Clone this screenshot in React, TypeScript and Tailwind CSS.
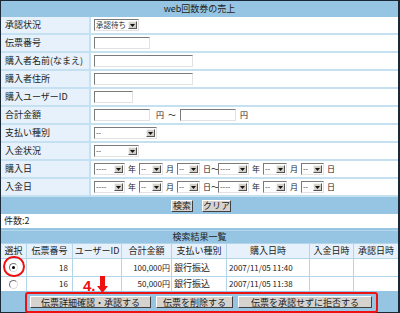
const font = "font-['Noto_Sans_CJK_JP','Noto_Sans',sans-serif]";

const Triangle = () => (
  <svg width="5" height="3" viewBox="0 0 5 3">
    <path d="M0 0 L5 0 L2.5 3 Z" fill="#111" />
  </svg>
);

const Sel = ({ text, w }: { text: string; w: string }) => (
  <div
    className={`flex h-[12px] items-stretch border border-t-[#7a7a7a] border-l-[#7a7a7a] border-b-[#e2e2e2] border-r-[#e2e2e2] bg-white ${w}`}
  >
    <span className="flex-1 overflow-hidden whitespace-nowrap pl-px text-[7.5px] leading-[10px] text-[#333]">{text}</span>
    <span className="m-px flex w-[9px] items-center justify-center border border-t-[#f4f4f4] border-l-[#f4f4f4] border-b-[#555] border-r-[#555] bg-[#d4d0c8]">
      <Triangle />
    </span>
  </div>
);

const Input = ({ w }: { w: string }) => (
  <div
    className={`h-[12px] border border-t-[#7a7a7a] border-l-[#7a7a7a] border-b-[#e2e2e2] border-r-[#e2e2e2] bg-white ${w}`}
  />
);

const Btn = ({ label, w }: { label: string; w: string }) => (
  <div
    className={`flex h-[12px] items-center justify-center border border-t-white border-l-white border-b-[#404040] border-r-[#404040] bg-[#d6d3ce] text-[9px] leading-none text-[#222] ${w}`}
  >
    {label}
  </div>
);

const Row = ({ label, gap = "gap-[4px]", children }: { label: string; gap?: string; children?: React.ReactNode }) => (
  <div className="flex h-[18px] border-b-2 border-[#c4e0f1]">
    <div className="flex w-[88px] items-center bg-[#e6f1fb] pl-[4px] text-[9px] text-[#222]">{label}</div>
    <div className="w-[2px] bg-[#c4e0f1]" />
    <div className={`flex flex-1 items-center bg-white pl-[3px] text-[9px] text-[#222] ${gap}`}>{children}</div>
  </div>
);

const DateRow = () => (
  <>
    <Sel text="----" w="w-[31px]" />
    <span className="text-[8px]">年</span>
    <Sel text="--" w="w-[24px]" />
    <span className="text-[8px]">月</span>
    <Sel text="--" w="w-[23px]" />
    <span className="-mr-[4px] text-[8px]">日～</span>
    <Sel text="----" w="w-[31px]" />
    <span className="text-[8px]">年</span>
    <Sel text="--" w="w-[24px]" />
    <span className="text-[8px]">月</span>
    <Sel text="--" w="w-[23px]" />
    <span className="text-[8px]">日</span>
  </>
);

const Radio = ({ on }: { on?: boolean }) => (
  <div className="flex h-[9px] w-[9px] items-center justify-center rounded-full border border-t-[#777] border-l-[#777] border-b-[#ddd] border-r-[#ddd] bg-white">
    {on && <div className="h-[3px] w-[3px] rounded-full bg-black" />}
  </div>
);

const cols = "grid grid-cols-[25px_45px_48px_49px_54px_82px_43px_1fr] gap-x-px";

export default function App() {
  const heads = ["選択", "伝票番号", "ユーザーID", "合計金額", "支払い種別", "購入日時", "入金日時", "承認日時"];
  const rows = [
    { on: true, no: "18", amt: "100,000円", pay: "銀行振込", date: "2007/11/05 11:40", h: "h-[17px]" },
    { on: false, no: "16", amt: "50,000円", pay: "銀行振込", date: "2007/11/05 11:38", h: "h-[14px]" },
  ];
  return (
    <div className={`relative h-[313px] w-[400px] border-t border-l border-b border-r-2 border-[#1b2937] bg-[#95c5e2] ${font}`}>
      <div className="flex h-[16px] items-center justify-center text-[9px] text-[#222]">web回数券の売上</div>

      <Row label="承認状況">
        <Sel text="承認待ち" w="w-[45px]" />
      </Row>
      <Row label="伝票番号">
        <Input w="w-[56px]" />
      </Row>
      <Row label="購入者名前(なまえ)">
        <Input w="w-[99px]" />
      </Row>
      <Row label="購入者住所">
        <Input w="w-[99px]" />
      </Row>
      <Row label="購入ユーザーID">
        <Input w="w-[39px]" />
      </Row>
      <Row label="合計金額">
        <Input w="w-[56px]" />
        <span className="ml-[2px] text-[8px]">円</span>
        <span className="text-[8px]">～</span>
        <Input w="w-[56px]" />
        <span className="text-[8px]">円</span>
      </Row>
      <Row label="支払い種別">
        <Sel text="--" w="w-[63px]" />
      </Row>
      <Row label="入金状況">
        <Sel text="--" w="w-[45px]" />
      </Row>
      <Row label="購入日" gap="gap-[3px]">
        <DateRow />
      </Row>
      <Row label="入金日" gap="gap-[3px]">
        <DateRow />
      </Row>

      <div className="flex h-[17px] items-center justify-center gap-[9px] pl-[3px]">
        <Btn label="検索" w="w-[22px]" />
        <Btn label="クリア" w="w-[29px]" />
      </div>

      <div className="flex h-[14px] items-center bg-white pl-[3px] text-[9px] text-[#222]">件数:2</div>

      <div className="mt-[2px] flex h-[13px] items-center justify-center border-t border-[#b5d6ea] text-[9px] text-[#222]">
        検索結果一覧
      </div>

      <div className={`${cols} bg-[#b3d5ea] pt-px`}>
        {heads.map((h) => (
          <div key={h} className="flex h-[14px] items-center justify-center bg-[#e6f1fb] text-[9px] text-[#222]">
            {h}
          </div>
        ))}
      </div>
      {rows.map((r) => (
        <div key={r.no} className={`${cols} bg-[#b3d5ea] pt-px`}>
          <div className={`flex items-center justify-center bg-white ${r.h}`}>
            <Radio on={r.on} />
          </div>
          <div className="flex items-center justify-end bg-white pr-[4px] text-[8px] text-[#222]">{r.no}</div>
          <div className="bg-white" />
          <div className="flex items-center justify-end bg-white pr-[1px] text-[8px] text-[#222]">{r.amt}</div>
          <div className="flex items-center bg-white pl-[2px] text-[9px] text-[#222]">{r.pay}</div>
          <div className="flex items-center bg-white pl-[2px] text-[8px] text-[#222]">{r.date}</div>
          <div className="bg-white" />
          <div className="bg-white" />
        </div>
      ))}

      <div className="flex h-[22px] items-center pl-[24px]">
        <div className="flex h-[21px] w-[353px] items-center gap-[5px] rounded-[3px] border-2 border-[#ee1111] pl-[3px]">
          <Btn label="伝票詳細確認・承認する" w="w-[121px]" />
          <Btn label="伝票を削除する" w="w-[77px]" />
          <Btn label="伝票を承認せずに拒否する" w="w-[134px]" />
        </div>
      </div>

      <div className="absolute left-[2px] top-[255px] h-[21px] w-[22px] rounded-full border-2 border-[#ee1111]" />
      <div className="absolute left-[82px] top-[275px] flex items-end">
        <span className="font-['Liberation_Sans',sans-serif] text-[15px] font-bold leading-none text-[#ee1111]">4.</span>
        <svg width="11" height="17" viewBox="0 0 11 17" className="ml-[1px]">
          <path d="M3 0 H8 V10 H11 L5.5 17 L0 10 H3 Z" fill="#ee1111" />
        </svg>
      </div>
    </div>
  );
}
